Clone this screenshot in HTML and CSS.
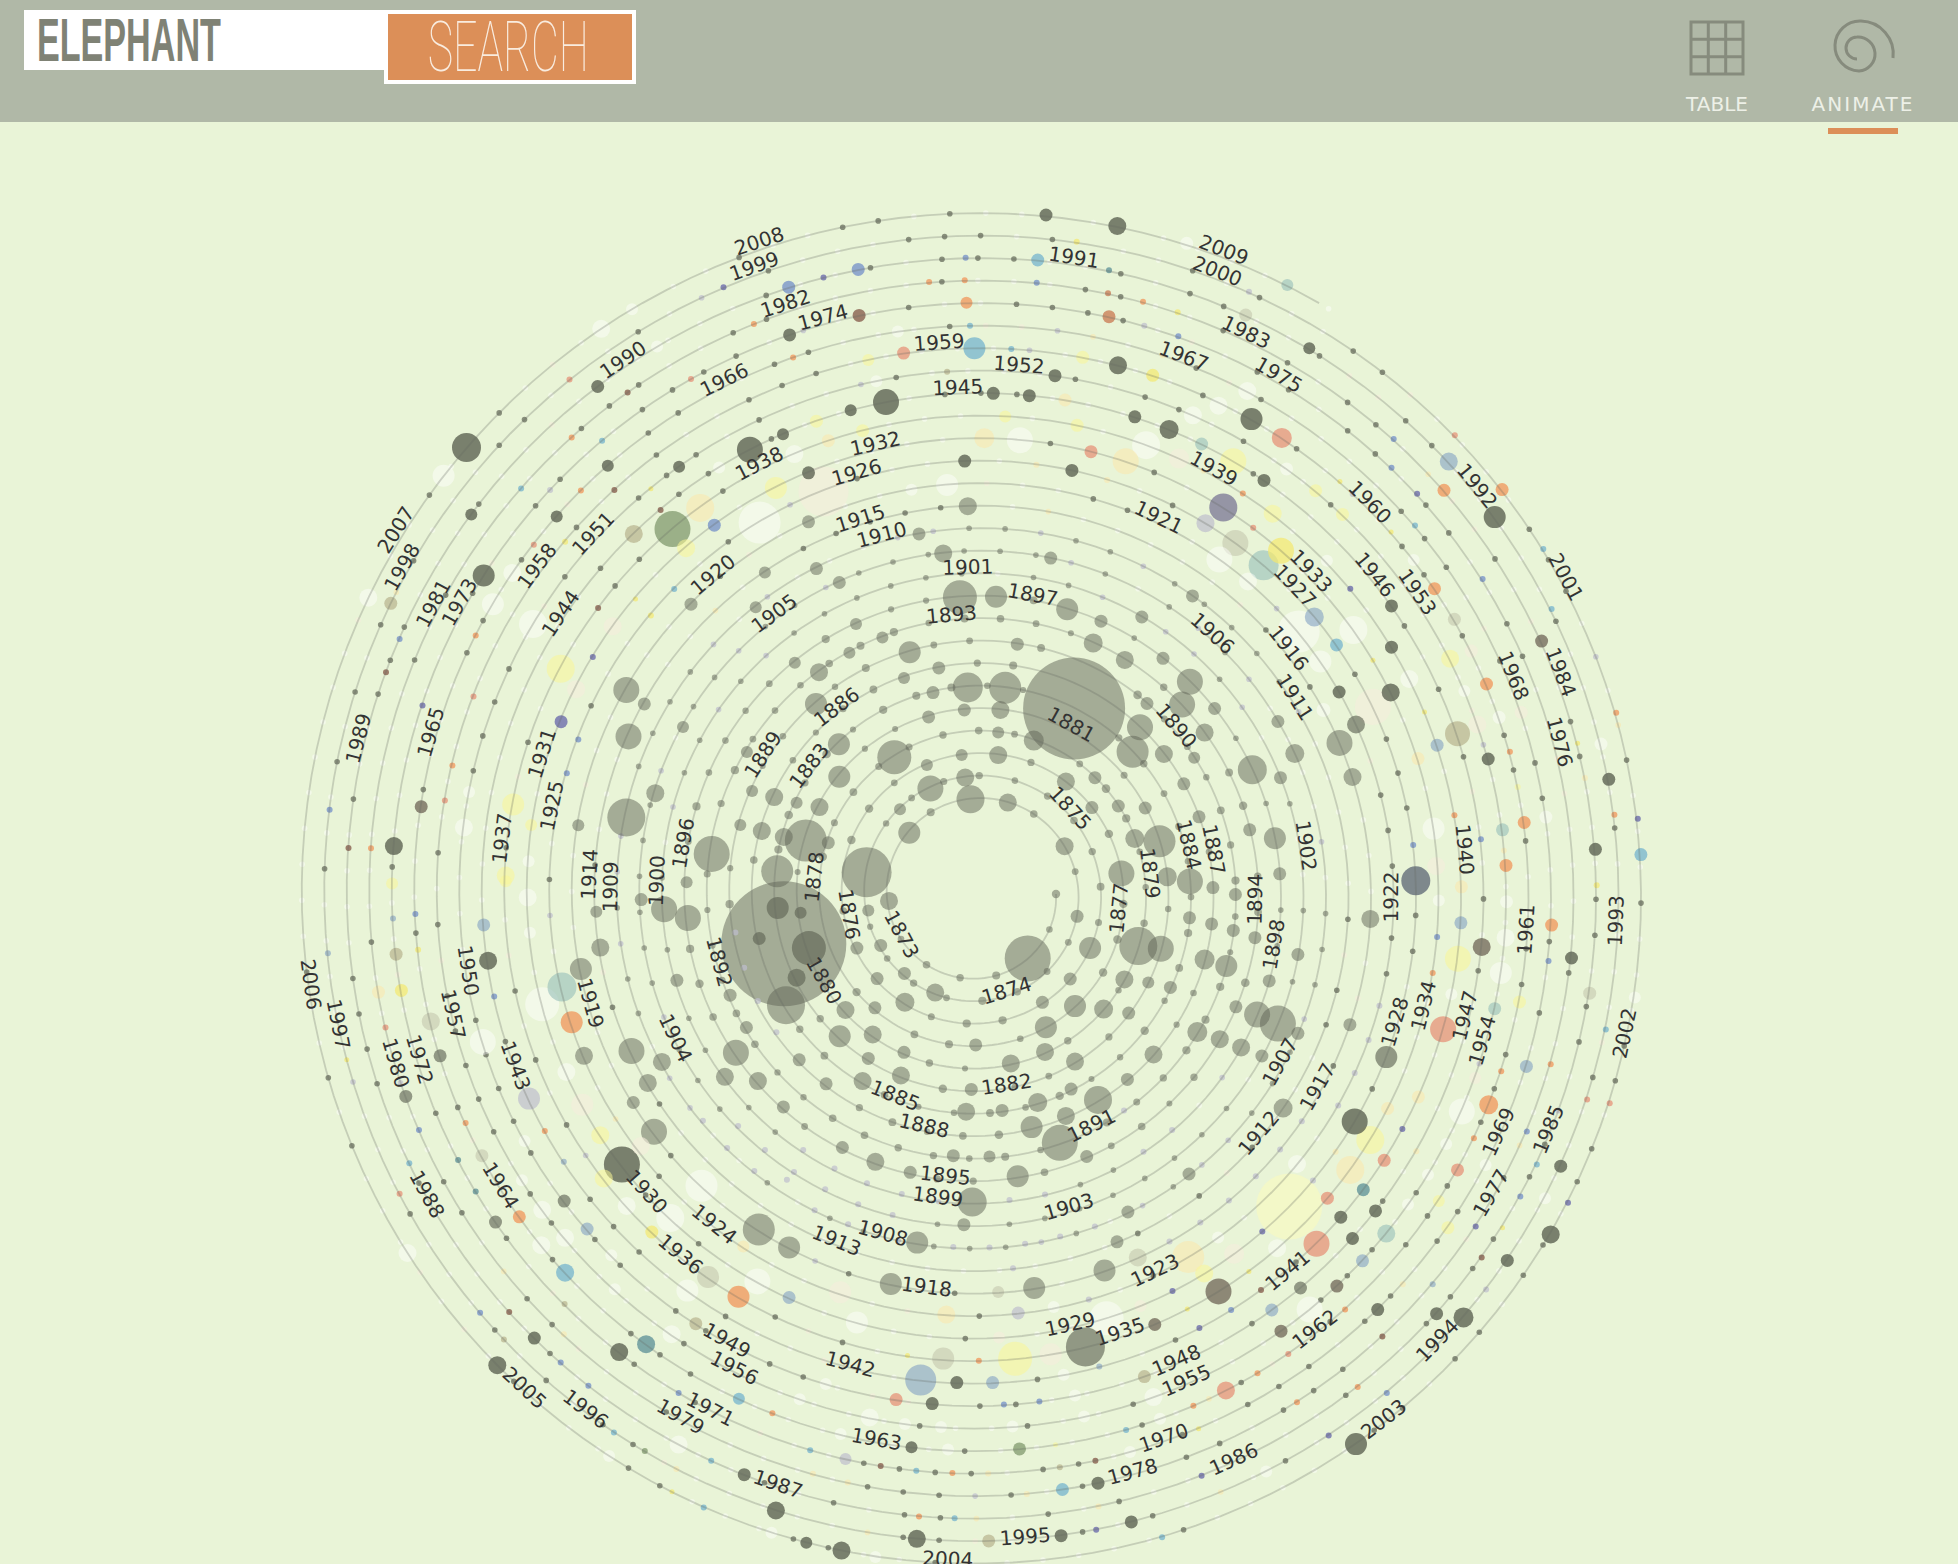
FILE: index.html
```html
<!DOCTYPE html>
<html lang="en">

<head>
    <meta charset="UTF-8">
    <title>Elephant</title>
    <link rel="stylesheet" href="styles.css">
</head>

<body>

    <header class="topo">
        <div class="busca">
            <div class="campo"><span class="campo-texto">ELEPHANT</span></div>
            <div class="botao"><span class="botao-texto">SEARCH</span></div>
        </div>

        <nav class="menu">
            <div class="item">
                <svg class="icone" viewBox="0 0 80 65">
                    <path d="M14 7H66V59H14ZM31.3 7V59M48.7 7V59M14 24.3H66M14 41.7H66" />
                </svg>
                <span class="rotulo">TABLE</span>
            </div>
            <div class="item ativo">
                <svg class="icone" viewBox="0 0 80 65">
                    <path d="M34 44A11 11 0 0 1 34 22A17 17 0 0 1 36 56A25 25 0 0 1 38 6A33 33 0 0 1 70 43" />
                </svg>
                <span class="rotulo">ANIMATE</span>
            </div>
        </nav>
    </header>

    <main class="conteudo">
        <svg id="espiral" class="espiral" viewBox="0 122 1958 1442"></svg>
    </main>

    <script src="script.js"></script>
</body>

</html>
```

FILE: styles.css
```css
html,
body {
    margin: 0;
    height: 100%;
    overflow: hidden;
    background-color: #e9f4d7;
}

.topo {
    display: flex;
    justify-content: space-between;
    height: 122px;
    background-color: #b0b8a7;
    font-family: "DejaVu Sans", sans-serif;
}

.busca {
    display: flex;
    align-items: flex-start;
    margin: 10px 0 0 24px;
}

.campo {
    width: 360px;
    height: 60px;
    background-color: #fff;
}

.campo-texto {
    display: block;
    padding-left: 23px;
    font-family: "Liberation Sans", sans-serif;
    font-weight: bold;
    font-size: 61px;
    line-height: 60px;
    color: #7f8275;
    white-space: nowrap;
    transform: scaleX(0.56);
    transform-origin: left;
}

.botao {
    width: 244px;
    height: 66px;
    border: 4px solid #fff;
    background-color: #dc8f58;
}

.botao-texto {
    display: block;
    padding-left: 65px;
    font-family: Roboto, sans-serif;
    font-weight: 100;
    font-size: 70px;
    line-height: 66px;
    color: #f9ecdf;
    white-space: nowrap;
    transform: scaleX(0.612);
    transform-origin: left;
}

.menu {
    display: flex;
    gap: 36px;
    padding-right: 40px;
}

.item {
    position: relative;
    display: flex;
    flex-direction: column;
    align-items: center;
    width: 110px;
    padding-top: 15px;
}

.ativo::after {
    content: "";
    position: absolute;
    left: 20px;
    top: 128px;
    width: 70px;
    height: 6px;
    background-color: #dc8f58;
}

.icone {
    width: 80px;
    height: 65px;
}

.icone path {
    fill: none;
    stroke: #868b7d;
    stroke-width: 3;
}

.rotulo {
    margin-top: 12px;
    font-size: 20px;
    line-height: 24px;
    color: #edf0e7;
}

.ativo .rotulo {
    letter-spacing: 2px;
}

.conteudo {
    height: 1442px;
}

.espiral {
    display: block;
    width: 1958px;
    height: 1442px;
}

.linha {
    fill: none;
    stroke: rgba(100, 105, 95, 0.27);
    stroke-width: 1.8;
}

.ano {
    font-family: "DejaVu Sans", sans-serif;
    font-size: 20px;
    fill: #333;
    text-anchor: middle;
    dominant-baseline: central;
}
```

FILE: script.js
```js
const CX = 977, CY = 894, R0 = 79, PASSO = 22.5, THETA_FIM = 168.63, ARCO = 36;
const svgNS = "http://www.w3.org/2000/svg";
const svg = document.getElementById("espiral");

const cores = {
    g: "rgba(95,100,85,.5)", m: "rgba(95,100,85,.64)", d: "rgba(90,95,80,.78)", f: "rgba(90,95,80,.68)",
    w: "rgba(255,255,255,.45)", y: "rgba(250,245,150,.55)", Y: "rgba(243,232,110,.7)", z: "rgba(250,250,190,.6)",
    c: "rgba(250,232,175,.6)", e: "rgba(245,237,220,.6)", o: "rgba(240,150,90,.75)",
    s: "rgba(230,135,110,.68)", S: "rgba(200,115,75,.72)", b: "rgba(100,170,205,.65)",
    B: "rgba(105,135,200,.7)", i: "rgba(100,100,170,.75)", t: "rgba(150,190,185,.6)",
    T: "rgba(80,135,145,.7)", l: "rgba(190,190,205,.7)", q: "rgba(130,160,195,.6)",
    n: "rgba(170,160,120,.55)", k: "rgba(190,190,165,.5)", p: "rgba(130,85,70,.75)",
    h: "rgba(110,100,85,.75)", u: "rgba(105,100,140,.66)", x: "rgba(90,100,115,.75)",
    v: "rgba(125,150,105,.72)"
};

// circulos lidos por quadrante: origem e escala de cada recorte
const quadros = [
    { x: 290, y: 200, sx: 2.272, sy: 2.306, lista: [
        [401,571,14.5,"d"],[349,636,11,"w"],[178,917,9,"w"],[229,930,6.5,"n"],[440,866,11,"d"],[412,725,6,"d"],[606,730,6,"d"],[722,613,6,"d"],[699,430,6.5,"d"],[884,615,6,"d"],
        [1135,311,6.5,"d"],[1293,266,6.5,"p"],[1133,201,6.5,"B"],[1291,160,6.5,"B"],[1537,237,6,"o"],[1555,342,11,"b"],[1394,353,6.5,"s"],[1354,466,13,"d"],[1274,485,6,"d"],[1045,576,13,"d"],
        [1120,540,6,"d"],[1178,629,6.5,"d"],[1533,602,6.5,"d"],[1540,706,9,"g"],[1484,815,9,"g"],[1522,916,17,"g"],[1408,1043,11,"g"],[1540,1124,15,"g"],[1546,1382,14,"g"],[1455,1357,13,"g"],
        [1373,1285,17,"g"],[1247,1255,11,"g"],[1248,1330,11,"g"],[1195,1162,11,"g"],[1202,1089,9,"g"],[1147,1067,6,"g"],[1271,1044,6,"g"],[1346,1009,6,"g"],[1286,978,6,"g"],[1058,939,6,"g"],
        [1248,882,6.5,"g"],[1196,850,6.5,"g"],[1079,859,6,"g"],[911,932,6.5,"g"],[1178,742,6.5,"g"],[1429,770,6.5,"g"],[869,759,18,"v"],[781,770,9,"n"],[964,750,6.5,"B"],[900,803,9,"y"],
        [932,710,14,"c"],[1067,744,21,"w"],[1104,664,11,"y"],[1146,586,9,"w"],[1212,672,25,"e"],[1223,555,6.5,"c"],[1301,532,6.5,"y"],[1196,510,6.5,"y"],[1314,369,6,"y"],[1381,303,6,"w"],
        [1332,418,6,"w"],[1493,657,11,"w"],[1412,668,6,"w"],[975,617,6,"w"],[834,338,6,"w"],[707,297,9,"w"],[777,252,6,"w"],[461,932,11,"w"],[505,860,9,"w"],[552,978,14,"w"],
        [615,1081,14,"y"],[650,1128,9,"e"],[733,983,9,"e"],[764,1130,13,"g"],[805,1162,6.5,"g"],[769,1237,13,"g"],[893,1215,6,"g"],[616,1203,6.5,"i"],[830,1368,9,"g"],[1038,1273,6,"g"],
        [1100,1377,9,"g"],[1050,1363,6,"g"],[1151,1390,6,"g"],[1203,1400,9,"g"],[1386,1405,6,"g"],[1407,1459,11,"g"],[1526,1280,6,"g"],[1534,1332,9,"g"],[1447,1303,6,"g"],[1532,1176,6.5,"g"],
        [1461,1136,6.5,"g"],[1451,1192,6.5,"g"],[1474,1079,6.5,"g"],[1395,1102,6,"g"],[764,1424,19,"g"],[655,1442,6,"g"],[958,1508,18,"g"],[1172,1477,21,"g"],[1122,1469,9,"g"],[1072,1455,9,"g"],
        [1023,1441,6,"g"],[1223,1482,6.5,"g"],[1107,1548,16,"g"],[1310,1550,25,"g"],[236,1490,9,"d"],[298,1399,6.5,"h"],[507,1394,11,"y"],[395,1447,9,"w"],[490,1558,9,"y"],[542,1525,6,"w"],
        [407,1365,6,"w"],[548,1441,6,"y"],[985,201,3,"i"],[1054,286,3,"o"],[635,414,3,"s"],[640,548,3,"o"],[709,555,3,"b"],[525,665,3,"b"],[591,669,3,"l"],[661,670,3,"o"],
        [737,669,3,"p"],[911,413,3,"s"],[1143,363,3,"o"],[767,444,3,"p"],[554,795,3,"s"],[625,788,3,"Y"],[422,1004,3,"o"],[249,1012,3,"B"],[301,1166,3,"i"],[369,1304,3,"o"],
        [352,1385,3,"s"],[184,1495,3,"o"],[90,1406,3,"B"],[133,1494,3,"p"],[873,897,3,"b"],[688,1054,3,"i"],[655,1244,3,"B"],[629,1322,3,"B"],[820,666,2.5,"Y"],[820,958,3,"Y"],
        [785,920,2.5,"Y"],[1535,133,3,"B"],[1212,179,3,"i"],[1452,189,3,"o"],[1533,185,3,"o"],[1545,290,3,"b"],[218,1089,3,"p"],[417,1145,3,"s"],[700,941,3,"p"],[842,715,3,"p"],[1493,396,3,"n"]
    ] },
    { x: 980, y: 400, sx: 2.306, sy: 2.613, lista: [
        [626,50,11,"d"],[696,99,10,"s"],[357,44,6.5,"d"],[436,77,9.5,"d"],[491,40,9,"w"],[550,15,9,"w"],[224,66,6.5,"y"],[58,43,6,"y"],[10,100,10,"c"],[92,105,13,"w"],
        [383,118,14,"w"],[511,115,6.5,"t"],[336,160,13,"c"],[256,135,6.5,"s"],[212,184,6.5,"d"],[459,153,10,"e"],[584,160,13,"y"],[655,210,6.5,"d"],[707,180,6.5,"w"],[774,237,6.5,"y"],
        [836,299,6.5,"y"],[561,281,14,"u"],[520,322,9,"l"],[675,297,9,"y"],[589,374,13,"k"],[694,394,13,"Y"],[654,432,15,"t"],[552,417,13,"w"],[618,474,9,"w"],[800,420,6,"w"],
        [771,567,9.5,"q"],[735,605,21,"w"],[861,601,14,"w"],[822,640,6.5,"b"],[785,683,11,"w"],[792,810,7,"w"],[906,802,18,"e"],[990,729,9,"w"],[1000,418,6,"w"],[1048,493,6.5,"o"],
        [949,538,6.5,"d"],[949,646,6.5,"d"],[1094,573,6.5,"k"],[1084,676,9,"y"],[1133,656,6.5,"e"],[947,764,9,"d"],[828,763,6.5,"d"],[867,848,9,"m"],[829,896,13,"g"],[1101,872,12.5,"n"],
        [1147,848,9,"e"],[1197,829,6.5,"w"],[1248,816,6.5,"e"],[1117,760,6,"w"],[1168,742,6.5,"o"],[1295,630,6.5,"h"],[1081,161,9,"q"],[1070,236,6.5,"o"],[1204,234,6.5,"o"],[1187,306,11,"d"],
        [1172,938,6.5,"d"],[1054,902,6.5,"q"],[1010,937,6.5,"c"],[859,985,9,"g"],[726,924,9.5,"g"],[693,987,6.5,"g"],[628,966,14.5,"g"],[687,840,6.5,"g"],[424,925,9,"g"],[494,935,6,"g"],
        [352,919,16,"g"],[369,855,13,"g"],[518,869,9,"g"],[541,806,6.5,"g"],[466,796,13,"g"],[484,736,13,"g"],[385,793,6.5,"g"],[422,675,6.5,"g"],[334,679,9,"g"],[261,635,9.5,"g"],
        [279,578,6.5,"g"],[373,567,6.5,"g"],[490,512,6.5,"g"],[201,547,11,"g"],[163,413,6.5,"g"],[37,514,11,"g"],[86,638,6.5,"g"],[58,752,16,"g"],[47,810,9,"g"],[217,806,51,"g"],
        [124,890,10,"g"],[42,869,6,"g"],[42,928,9,"g"],[198,997,9,"g"],[265,987,6.5,"g"],[64,1052,9,"g"],[319,1061,6.5,"g"],[381,1066,6.5,"g"],[258,1065,6.5,"g"],[195,1166,9,"g"],
        [357,1146,9.5,"g"],[414,1153,16,"g"],[470,1003,6.5,"g"],[505,1089,6.5,"g"],[622,1123,6.5,"g"],[680,1145,11,"g"],[326,1237,13,"g"],[432,1246,9.5,"g"],[484,1258,13,"g"],[537,1274,6.5,"g"],
        [589,1292,6.5,"g"],[691,1238,6.5,"g"],[483,1353,6.5,"g"],[534,1369,6.5,"g"],[584,1386,6.5,"g"],[634,1405,6.5,"g"],[224,1349,6.5,"g"],[254,1432,11,"g"],[110,1459,23,"g"],[365,1427,19,"g"],
        [417,1434,13,"g"],[518,1462,10,"g"],[568,1479,11,"g"],[733,1449,6.5,"g"],[333,1514,9,"g"],[388,1522,6,"g"],[439,1535,6.5,"g"],[208,1513,6.5,"g"],[667,1518,6.5,"g"],[900,1356,9,"g"],
        [1005,1256,14.5,"x"],[1110,1272,6.5,"c"],[1109,1366,6.5,"q"],[1157,1429,9,"h"],[1102,1460,13,"y"],[1201,1497,11,"w"],[1212,1405,9,"w"],[1214,1311,6.5,"w"],[1058,1308,6,"w"],[1052,1218,9,"e"],
        [1046,1120,11,"w"],[1205,1123,6.5,"t"],[1255,1104,6.5,"o"],[1305,1090,6.5,"w"],[1213,1216,6.5,"o"],[1318,1372,6.5,"o"],[1419,1174,6.5,"d"],[1364,1458,6.5,"d"],[1406,1550,6.5,"k"],[1524,1188,6.5,"b"],
        [1450,991,6.5,"d"],[1432,899,6.5,"w"],[1095,92,3,"s"],[954,102,3,"B"],[949,177,3,"B"],[1008,245,3,"i"],[1003,328,3,"b"],[1159,468,3,"B"],[1318,546,3,"b"],[1299,389,3,"b"],
        [854,493,3,"i"],[1222,919,3,"o"],[1094,1085,3,"o"],[1044,1497,3,"o"],[1517,1094,3,"i"],[1463,1084,3,"o"],[1467,817,3,"o"],[1395,988,3,"c"],[606,244,3,"o"],[630,334,3,"s"],
        [1422,1268,3,"Y"],[1240,1011,3,"y"],[1378,897,2.5,"Y"],[830,213,2.5,"Y"],[948,345,2.5,"Y"],[906,680,2.5,"Y"],[1025,815,2.5,"Y"],[1155,1148,3,"B"],[1054,1403,3,"B"],[999,1163,3,"B"],
        [130,169,3,"c"],[293,209,3,"c"],[1311,1466,3,"B"]
    ] },
    { x: 290, y: 880, sx: 2.272, sy: 2.292, lista: [
        [1122,146,62.5,"g"],[1108,64,11,"m"],[1160,75,6,"m"],[1066,134,6.5,"m"],[1179,156,17,"m"],[1151,224,9,"m"],[1127,287,19,"g"],[1361,48,9,"g"],[1314,70,6,"g"],[901,5,6,"g"],
        [850,67,13,"g"],[904,87,13,"g"],[798,45,6.5,"g"],[696,73,6,"g"],[705,155,9,"g"],[661,204,11,"g"],[618,245,14.5,"t"],[573,285,17,"w"],[640,326,11,"o"],[668,403,9,"g"],
        [776,392,13,"g"],[845,417,9,"g"],[813,465,9,"g"],[780,510,6.5,"g"],[827,577,13,"g"],[879,230,6.5,"g"],[1000,264,6.5,"g"],[1037,338,6.5,"g"],[1013,396,13,"g"],[988,451,9,"g"],
        [1063,461,9,"g"],[1121,520,6.5,"g"],[1157,412,6.5,"g"],[1218,467,6.5,"g"],[1249,358,11,"g"],[1324,354,9,"g"],[1262,298,9,"g"],[1288,156,6.5,"g"],[1342,150,6.5,"g"],[1334,226,6.5,"g"],
        [1329,293,6.5,"g"],[1396,214,6.5,"g"],[1397,280,9.5,"g"],[1466,258,9,"g"],[1395,395,6.5,"g"],[1314,409,6.5,"g"],[1388,448,9,"g"],[1301,461,9,"g"],[1548,480,6.5,"g"],[1536,531,9,"g"],
        [1558,378,6.5,"g"],[1255,613,6.5,"g"],[1330,646,9,"g"],[1409,670,6.5,"g"],[1507,632,6.5,"g"],[1550,738,14.5,"g"],[1531,790,6.5,"g"],[1425,831,11,"g"],[1365,926,11,"g"],[1134,842,11,"g"],
        [1065,801,16,"g"],[754,652,18,"d"],[713,684,9,"y"],[623,736,6.5,"m"],[675,800,6.5,"q"],[467,784,6.5,"m"],[521,772,6.5,"o"],[573,756,9,"w"],[527,688,6,"w"],[533,598,6,"w"],
        [543,501,11,"l"],[436,632,6.5,"k"],[705,585,9,"y"],[797,610,9,"e"],[664,515,11,"e"],[628,440,9,"w"],[438,371,13,"w"],[341,403,6.5,"m"],[320,324,9,"k"],[263,496,6.5,"m"],
        [241,170,6.5,"n"],[201,257,6.5,"c"],[253,253,6.5,"Y"],[440,103,6.5,"q"],[450,185,9,"d"],[540,40,9,"w"],[545,121,6,"w"],[232,8,6,"y"],[490,3,6,"y"],[935,701,16,"w"],
        [864,775,14,"w"],[765,747,9,"w"],[822,807,6.5,"Y"],[625,820,9,"w"],[571,837,9,"w"],[625,900,9,"b"],[730,860,6,"w"],[267,855,9,"w"],[738,938,6,"w"],[903,941,11,"w"],
        [950,910,11,"k"],[1062,920,13,"w"],[1019,955,11,"o"],[1134,957,6.5,"q"],[1030,840,6,"c"],[1250,945,11,"e"],[1288,1014,11,"w"],[1491,996,9,"c"],[1484,1097,11,"k"],[1433,1146,15.5,"q"],
        [1515,1152,6.5,"d"],[1459,1200,6.5,"d"],[1377,1191,6.5,"s"],[1412,1300,6,"d"],[1262,1327,6,"l"],[1020,1189,6,"b"],[809,1064,9,"T"],[748,1082,9,"d"],[867,1041,9,"w"],[922,1017,6.5,"n"],
        [555,1050,6.5,"d"],[471,1112,9,"d"],[1032,1363,6.5,"d"],[1104,1445,9,"d"],[1173,1519,6,"d"],[1253,1537,9,"d"],[1424,1510,9,"d"],[883,1294,9,"w"],[725,1320,6,"w"],[1094,1496,6,"w"],
        [1217,1155,6,"w"],[1158,1190,6,"w"],[1317,1232,9,"w"],[1397,1247,6,"w"],[1251,1270,6,"w"],[1479,1254,6,"w"],[1495,1305,6,"w"],[1330,1552,6,"w"],[217,338,3,"s"],[285,78,3,"B"],
        [234,88,3,"q"],[86,168,3,"q"],[293,573,3,"B"],[271,649,3,"b"],[249,719,3,"s"],[382,642,3,"T"],[422,714,3,"T"],[399,557,3,"o"],[579,575,3,"o"],[464,267,3,"B"],
        [432,992,3,"B"],[498,990,3,"p"],[615,1106,3,"B"],[678,1159,3,"B"],[736,1266,3,"b"],[806,1309,3,"v"],[883,1176,3,"B"],[957,1331,3,"b"],[868,1402,2.5,"Y"],[940,1438,3,"b"],
        [878,1350,3,"c"],[1096,1222,3,"o"],[1182,1307,3,"b"],[1342,1343,3,"p"],[1505,1359,3,"o"],[1423,1354,3,"b"],[1510,1463,3,"b"],[1429,1459,3,"o"],[1267,1381,3,"c"],[1188,1361,3,"c"],
        [622,646,3,"q"],[624,972,3,"n"],[1403,1090,2.5,"Y"],[1565,1102,3,"o"],[129,412,2.5,"Y"],[291,160,3,"Y"],[622,1041,3,"c"],[486,1053,3,"n"],[1012,120,3,"l"],[1032,201,3,"l"],
        [1063,277,3,"l"],[1105,349,3,"l"],[938,552,3,"l"],[1018,564,3,"l"],[993,614,3,"l"],[1079,619,3,"l"],[1166,619,3,"l"],[1055,667,3,"l"],[1145,669,3,"l"],[1237,661,3,"l"],
        [1129,687,3,"l"],[1216,709,3,"l"],[1311,695,3,"l"],[1192,757,3,"l"],[1291,743,3,"l"],[1390,720,3,"l"],[1268,789,3,"l"],[1369,768,3,"l"],[1507,841,3,"l"]
    ] },
    { x: 980, y: 980, sx: 2.306, sy: 2.685, lista: [
        [144,60,6.5,"g"],[219,70,11,"g"],[285,78,9.5,"g"],[343,89,6.5,"g"],[152,127,11,"g"],[150,193,9,"g"],[219,219,9,"g"],[71,224,9,"g"],[400,200,9,"g"],[501,140,10,"g"],
        [553,159,9,"g"],[602,181,9,"g"],[590,72,6.5,"g"],[639,93,13,"g"],[687,117,18,"g"],[733,143,6.5,"g"],[650,204,6.5,"g"],[853,120,6.5,"g"],[937,207,11,"m"],[340,267,6.5,"g"],
        [210,293,6.5,"g"],[272,322,14,"g"],[133,329,9.5,"g"],[51,350,6.5,"g"],[198,365,9,"g"],[119,395,11,"g"],[184,437,18,"g"],[246,474,6.5,"g"],[22,474,6,"g"],[87,527,11,"g"],
        [482,521,6.5,"g"],[341,623,6.5,"g"],[316,703,6.5,"g"],[287,780,11,"g"],[125,827,11,"g"],[699,344,9.5,"g"],[864,380,13,"d"],[900,430,14,"y"],[854,510,14,"c"],[932,484,6.5,"s"],
        [801,586,6.5,"s"],[884,563,6.5,"T"],[912,620,6.5,"d"],[832,637,6.5,"d"],[713,608,33,"z"],[776,708,13,"s"],[859,694,6.5,"d"],[937,681,9,"t"],[882,754,6.5,"q"],[823,822,6.5,"h"],
        [739,827,6.5,"m"],[917,885,6.5,"d"],[760,885,13,"w"],[673,886,6.5,"q"],[694,943,6.5,"h"],[550,836,13,"h"],[586,735,10,"e"],[480,744,16,"c"],[517,788,9,"y"],[364,745,9,"k"],
        [549,691,6,"w"],[685,720,9,"w"],[731,494,9,"w"],[292,908,17,"w"],[243,985,19.5,"m"],[403,925,6.5,"h"],[370,875,6,"e"],[81,1017,17,"y"],[163,1005,11,"e"],[88,894,6.5,"l"],
        [42,838,6,"k"],[170,878,6,"w"],[44,960,6,"e"],[193,1060,6,"w"],[29,1081,6.5,"q"],[379,1065,6.5,"n"],[400,1120,9,"w"],[567,1102,9,"s"],[219,1116,6,"w"],[240,1172,6,"w"],
        [415,1178,6,"w"],[75,1199,6,"w"],[91,1259,6.5,"v"],[346,1267,6,"w"],[272,1351,6.5,"d"],[190,1368,6.5,"b"],[349,1455,6.5,"d"],[187,1492,6.5,"d"],[20,1506,6.5,"n"],[867,1246,11,"d"],
        [660,1320,6,"w"],[1115,906,10,"d"],[1053,896,6.5,"d"],[1216,753,6.5,"d"],[1316,683,9,"d"],[1339,500,6.5,"d"],[1068,132,13,"s"],[1187,77,6.5,"t"],[1244,59,6.5,"y"],[1510,47,6,"w"],
        [1260,232,6.5,"q"],[1142,263,6,"e"],[1173,335,9.5,"o"],[1111,353,13,"w"],[1011,314,6.5,"c"],[940,345,6.5,"c"],[1075,440,6,"w"],[1033,523,6,"w"],[1101,510,6.5,"s"],[1166,497,6,"w"],
        [1058,593,6,"y"],[1079,665,6.5,"y"],[987,603,6,"w"],[1303,586,6,"w"],[1087,38,6,"w"],[1202,245,3,"o"],[1316,226,3,"o"],[1139,425,3,"o"],[1400,321,3,"s"],[1452,331,3,"s"],
        [1443,133,3,"b"],[1261,407,3,"B"],[1284,495,3,"b"],[1246,581,3,"B"],[1356,598,3,"i"],[1143,662,3,"i"],[1205,665,2.5,"Y"],[1157,745,3,"p"],[1167,831,3,"l"],[1044,817,3,"q"],
        [975,817,3,"c"],[938,1109,3,"B"],[871,1093,3,"o"],[731,1134,3,"o"],[804,1223,3,"i"],[842,885,3,"o"],[711,1004,3,"s"],[640,1056,3,"o"],[492,1143,3,"o"],[337,1208,3,"b"],
        [504,1205,2.5,"Y"],[266,1291,3,"p"],[420,1496,3,"b"],[268,1476,3,"i"],[273,1414,3,"c"],[511,1331,3,"i"],[137,1132,3,"B"],[55,1140,3,"B"],[506,934,3,"i"],[444,835,3,"i"],
        [579,886,3,"B"],[648,832,3,"p"],[651,675,3,"i"],[478,883,2.5,"Y"],[620,783,2.5,"Y"],[974,400,3,"i"],[928,957,3,"p"],[1006,460,3,"c"],[820,461,3,"c"],[275,1038,3,"q"],
        [174,1248,2.5,"y"],[184,1308,3,"n"],[108,1380,3,"c"],[19,1325,3,"c"],[332,350,3,"l"],[443,403,3,"l"],[377,461,3,"l"],[692,455,3,"l"],[636,527,3,"l"],[574,592,3,"l"],
        [508,651,3,"l"],[437,702,3,"l"],[768,538,3,"l"],[742,379,3,"l"],[826,337,3,"l"],[864,250,3,"l"],[896,161,3,"l"],[921,69,3,"l"],[265,662,3,"l"],[185,689,3,"l"],
        [104,708,3,"l"],[22,718,3,"l"],[76,774,3,"l"],[150,576,3,"l"],[68,591,3,"l"],[251,858,3,"l"]
    ] },
    { x: 900, y: 190, sx: 3, sy: 3, lista: [
        [438,75,6.5,"d"],[652,108,9,"d"],[860,160,6.5,"w"],[1162,285,6,"t"],[530,155,3,"Y"],[413,210,6.5,"b"],[627,241,3,"T"],[1047,305,3,"l"],[1037,375,6.5,"k"],[1228,475,6,"d"],
        [410,278,3,"B"],[624,310,3,"S"],[729,335,3,"o"],[627,380,6.5,"S"],[833,367,3,"Y"],[835,439,3,"B"],[733,407,3,"l"],[334,477,3,"b"],[465,557,6.5,"d"],[548,502,6.5,"y"],
        [654,526,9,"d"],[758,556,6.5,"Y"],[280,610,6.5,"d"],[388,617,6.5,"d"],[495,630,6.5,"c"],[1042,603,9,"w"]
    ] }
];

// [ano, x, y] no desenho reduzido (1568 de largura)
const anos = [
    [2008,608,193],[1999,604,213],[2009,980,200],[2000,975,217],[1991,860,206],[1982,629,243],[1974,659,254],[1959,752,274],[1952,816,292],[1967,948,285],
    [1983,998,266],[1975,1024,300],[1945,767,310],[1990,499,288],[1966,580,304],[1932,701,355],[1926,686,378],[1938,608,371],[1939,972,375],[1960,1097,402],
    [1992,1183,389],[2007,317,424],[1998,322,454],[1951,475,427],[1958,430,453],[1981,347,483],[1973,368,482],[1915,689,415],[1910,706,428],[1921,928,414],
    [1933,1050,457],[1927,1037,469],[1946,1101,460],[1953,1135,474],[2001,1254,462],[1920,571,460],[1944,449,491],[1905,620,491],[1901,775,454],[1897,827,476],
    [1893,762,492],[1906,971,507],[1916,1032,519],[1984,1250,538],[1968,1212,541],[1911,1037,558],[1886,670,566],[1881,858,580],[1890,942,581],[1976,1249,594],
    [1989,287,591],[1965,345,586],[1931,434,603],[1889,611,604],[1883,648,613],[1875,857,647],[1925,442,645],[1937,402,671],[1902,1046,677],[1884,952,676],
    [1887,972,680],[1940,1173,680],[1879,921,699],[1896,547,675],[1914,472,700],[1909,489,710],[1900,526,705],[1878,652,702],[1894,1005,720],[1922,1114,718],
    [1877,896,727],[1876,680,732],[1873,722,748],[1993,1294,737],[1961,1222,744],[1898,1020,756],[1892,576,770],[1950,375,777],[2006,249,788],[1919,473,803],
    [1997,271,820],[1957,363,812],[1880,660,785],[1874,806,793],[1904,541,831],[1947,1173,813],[1928,1117,818],[1934,1140,805],[1954,1187,833],[2002,1301,827],
    [1943,413,853],[1972,336,848],[1980,317,851],[1907,1025,850],[1917,1055,870],[1882,806,868],[1885,717,877],[1888,740,901],[1969,1200,906],[1891,874,901],
    [1912,1008,907],[1985,1240,904],[1964,401,949],[1930,518,954],[1988,342,956],[1895,757,941],[1899,751,958],[1977,1194,955],[1903,856,966],[1924,572,980],
    [1908,707,987],[1913,670,993],[1936,545,1004],[1941,1031,1017],[1923,925,1017],[1918,742,1030],[1929,857,1060],[1962,1053,1064],[1935,897,1066],[1949,582,1073],
    [1994,1151,1073],[1942,681,1092],[1956,588,1095],[1948,942,1089],[1955,950,1105],[2005,420,1111],[1996,469,1128],[1971,569,1128],[1979,545,1134],[2003,1108,1136],
    [1970,932,1151],[1963,702,1152],[1986,988,1168],[1978,907,1178],[1987,623,1188],[1995,821,1230],[2004,759,1248]
];

function criar(tag, attrs) {
    const el = document.createElementNS(svgNS, tag);
    for (const k in attrs) el.setAttribute(k, attrs[k]);
    return el;
}

const raio = (t) => R0 + PASSO * t / (2 * Math.PI);
const ponto = (t) => [CX + raio(t) * Math.cos(t), CY + raio(t) * Math.sin(t)];

// circulos maiores e coloridos
const lidos = [];
quadros.forEach(q => {
    q.lista.forEach(([x, y, r, c]) => lidos.push({ x: q.x + x / q.sx, y: q.y + y / q.sy, r, c }));
});

// semente fixa para o desenho nao mudar entre execucoes
let semente = 7;
function sorteio() {
    semente = (semente * 16807) % 2147483647;
    return semente / 2147483647;
}

function pontoLivre(x, y) {
    return !lidos.some(p => Math.hypot(p.x - x, p.y - y) < Math.max(p.r, 12));
}

// pontos pequenos a cada 36px ao longo da linha
for (let t = 0; t < THETA_FIM; t += ARCO / raio(t)) {
    const [x, y] = ponto(t);
    const v = sorteio();
    let r = 2.8, c = "f";
    if (raio(t) < 300) {
        c = "g";
        r = 3 + sorteio() * 1.3;
    } else if (raio(t) < 370) {
        c = v < 0.2 ? "l" : (v < 0.4 ? "w" : "g");
    } else if (v < 0.6) {
        c = "w";
    } else if (v < 0.68) {
        c = ["c", "l", "e", "e"][Math.floor(sorteio() * 4)];
    }
    if (pontoLivre(x, y)) svg.appendChild(criar("circle", { cx: x.toFixed(1), cy: y.toFixed(1), r: r.toFixed(1), fill: cores[c] }));
}

lidos.slice().sort((a, b) => b.r - a.r).forEach(p => {
    svg.appendChild(criar("circle", { cx: p.x.toFixed(1), cy: p.y.toFixed(1), r: p.r, fill: cores[p.c] }));
});

// a linha passa por cima dos circulos
let caminho = "";
for (let t = 0; t < THETA_FIM; t += 0.04) {
    const [x, y] = ponto(t);
    caminho += (caminho ? "L" : "M") + x.toFixed(1) + " " + y.toFixed(1);
}
svg.appendChild(criar("path", { class: "linha", d: caminho }));

anos.forEach(([ano, xr, yr]) => {
    const x = xr * 1958 / 1568, y = yr * 1564 / 1252;
    let giro = Math.atan2(y - CY, x - CX) * 180 / Math.PI + 90;
    while (giro > 90) giro -= 180;
    while (giro <= -90) giro += 180;
    const txt = criar("text", { class: "ano", x: x.toFixed(1), y: y.toFixed(1), transform: `rotate(${giro.toFixed(1)} ${x.toFixed(1)} ${y.toFixed(1)})` });
    txt.textContent = ano;
    svg.appendChild(txt);
});
```
